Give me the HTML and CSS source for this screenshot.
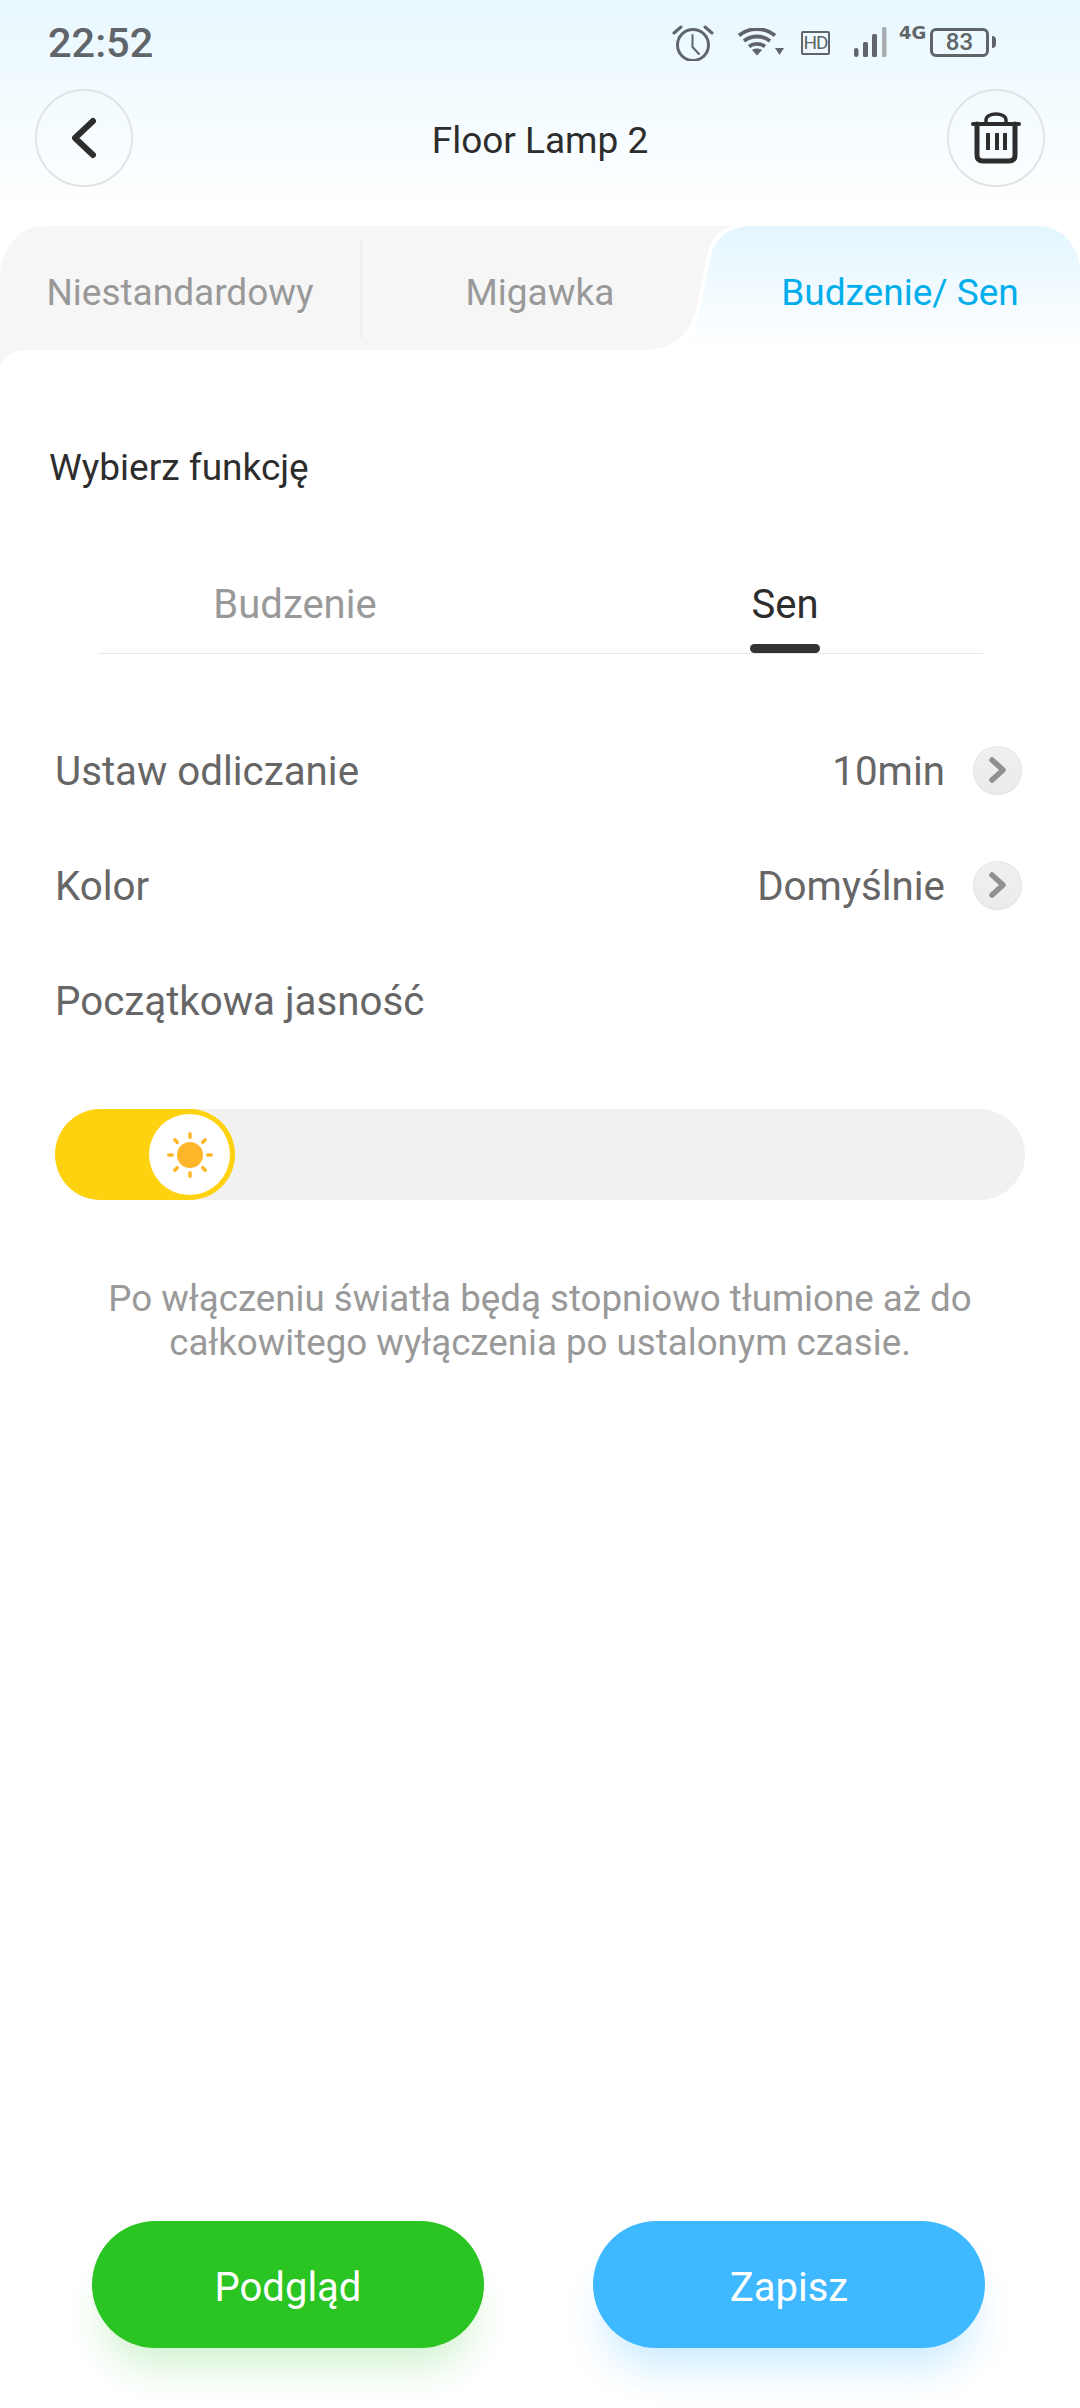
FILE: index.html
```html
<!DOCTYPE html>
<html lang="pl">
<head>
<meta charset="utf-8">
<title>Floor Lamp 2</title>
<link rel="stylesheet" href="styles.css">
</head>
<body>
<div class="page">
  <div class="status">
    <span class="time">22:52</span>
    <div class="status-icons">
      <svg class="ic-alarm" width="42" height="36" viewBox="0 0 42 36" fill="none" stroke="#5f6568" stroke-width="3" stroke-linecap="round">
        <circle cx="21" cy="20" r="15.500"/>
        <path d="M20.500 10V22L27 29" stroke-width="2"/>
        <path d="M2 8L9 2M33 2L40 8"/>
      </svg>
      <svg class="ic-wifi" width="46" height="28" viewBox="0 0 46 28" fill="none" stroke="#5f6568" stroke-width="3.800">
        <path d="M1 7.500C11-1 27-1 37 7.500"/>
        <path d="M6 13C13.500 7 24.500 7 32 13"/>
        <path d="M11 18.500C15.500 15 22.500 15 27 18.500"/>
        <path d="M14 22L19 27.500L24 22C21 20 17 20 14 22Z" fill="#5f6568" stroke="none"/>
        <path d="M37 20H46L41.500 27Z" fill="#5f6568" stroke="none"/>
      </svg>
      <span class="hd">HD</span>
      <svg class="ic-signal" width="34" height="30" viewBox="0 0 34 30">
        <rect x="1" y="21" width="4.500" height="9" rx="2.200" fill="#5f6568"/>
        <rect x="10" y="15" width="5" height="15" rx="1.500" fill="#5f6568"/>
        <rect x="19" y="7" width="5" height="23" rx="1.500" fill="#5f6568"/>
        <rect x="29" y="0" width="4.500" height="30" rx="1.500" fill="#a9afb1"/>
      </svg>
      <span class="net">4G</span>
      <span class="battery"><span class="level">83</span></span>
      <span class="nub"></span>
    </div>
  </div>

  <div class="header">
    <button class="round-btn">
      <svg width="30" height="44" viewBox="0 0 30 44" fill="none" stroke="#2d2d2d" stroke-width="6" stroke-linecap="round" stroke-linejoin="round">
        <path d="M24 5L6 22L24 39"/>
      </svg>
    </button>
    <h1 class="title">Floor Lamp 2</h1>
    <button class="round-btn">
      <svg width="50" height="54" viewBox="0 0 50 54" fill="none" stroke="#2d2d2d" stroke-width="5" stroke-linecap="round" stroke-linejoin="round">
        <path d="M2 13H48" stroke-width="4"/>
        <path d="M15 12V9C15 1 35 1 35 9V12" stroke-width="3.500"/>
        <path d="M6 13V44C6 48 8 50 12 50H38C42 50 44 48 44 44V13"/>
        <path d="M17 22V39M26 22V39M34 22V39" stroke-width="4" stroke-linecap="butt"/>
      </svg>
    </button>
  </div>

  <div class="tabs">
    <svg class="tabs-bg" width="1080" height="140" viewBox="0 0 1080 140">
      <defs>
        <linearGradient id="act" x1="0" y1="0" x2="0" y2="1">
          <stop offset="0" stop-color="#e3f5fe"/>
          <stop offset="1" stop-color="#ffffff"/>
        </linearGradient>
      </defs>
      <path d="M0 140V46C4 20 20 0 44 0H732C718 4 710 14 708 26L696 84C690 108 672 124 645 124H26C14 124 5 130 0 140Z" fill="#f6f6f6"/>
      <path d="M1080 124V40C1076 16 1060 0 1037 0H752C730 0 716 12 712 26L699 88C696 102 692 114 684 124Z" fill="url(#act)"/>
      <rect x="360" y="14" width="2" height="98" fill="#eeeeee"/>
    </svg>
    <span class="tab">Niestandardowy</span>
    <span class="tab">Migawka</span>
    <span class="tab tab-active">Budzenie/ Sen</span>
  </div>

  <main class="card">
    <p class="section-label">Wybierz funkcję</p>
    <div class="subtabs">
      <span class="subtab">Budzenie</span>
      <span class="subtab subtab-active">Sen</span>
    </div>

    <div class="rows">
      <div class="row">
        <span class="row-text">Ustaw odliczanie</span>
        <span class="row-value"><span class="row-text">10min</span>
          <span class="chev">
            <svg width="20" height="28" viewBox="0 0 20 28" fill="none" stroke="#909090" stroke-width="5.500" stroke-linecap="round" stroke-linejoin="round"><path d="M4 4L15 14L4 24"/></svg>
          </span>
        </span>
      </div>
      <div class="row">
        <span class="row-text">Kolor</span>
        <span class="row-value"><span class="row-text">Domyślnie</span>
          <span class="chev">
            <svg width="20" height="28" viewBox="0 0 20 28" fill="none" stroke="#909090" stroke-width="5.500" stroke-linecap="round" stroke-linejoin="round"><path d="M4 4L15 14L4 24"/></svg>
          </span>
        </span>
      </div>
      <div class="row"><span class="row-text">Początkowa jasność</span></div>
    </div>

    <div class="slider">
      <div class="slider-fill">
        <div class="thumb">
          <svg width="48" height="48" viewBox="0 0 48 48" stroke="#ffb529" stroke-width="3.500" stroke-linecap="round">
            <circle cx="24" cy="24" r="13" fill="#ffb529" stroke="none"/>
            <path d="M24 2.750V6.250M24 41.750V45.250M2.750 24H6.250M41.750 24H45.250M8.800 8.800L11.300 11.300M39.200 8.800L36.700 11.300M8.800 39.200L11.300 36.700M39.200 39.200L36.700 36.700"/>
          </svg>
        </div>
      </div>
    </div>

    <p class="hint">Po włączeniu światła będą stopniowo tłumione aż do<br>całkowitego wyłączenia po ustalonym czasie.</p>

    <div class="actions">
      <button class="cta cta-green">Podgląd</button>
      <button class="cta cta-blue">Zapisz</button>
    </div>
  </main>
</div>
</body>
</html>
```

FILE: styles.css
```css
* { box-sizing: border-box; }
html, body { margin: 0; padding: 0; }
body { font-family: Roboto, "Noto Sans", sans-serif; background: #fff; }

.page {
  width: 1080px;
  height: 2408px;
  display: flex;
  flex-direction: column;
  overflow: hidden;
  background: linear-gradient(#e8f8ff 0, #ffffff 215px);
}

.status {
  height: 84px;
  flex: none;
  display: flex;
  align-items: center;
  justify-content: space-between;
  padding: 0 84px 0 48px;
  color: #5f6568;
}
.time { font-size: 41.500px; font-weight: 500; line-height: 84px; padding-top: 2px; }
.status-icons { display: flex; align-items: center; height: 84px; }
.ic-alarm { margin-top: 2px; }
.ic-wifi { margin-left: 24px; margin-top: -1px; }
.hd {
  margin-left: 17px;
  margin-top: 1px;
  width: 29px;
  height: 24px;
  border: 2.500px solid #5f6568;
  border-radius: 2px;
  font-size: 19px;
  line-height: 19px;
  text-align: center;
  letter-spacing: -1px;
}
.ic-signal { margin-left: 23px; }
.net {
  margin-left: 12px;
  width: 27px;
  font-family: "DejaVu Sans", sans-serif;
  font-size: 18px;
  line-height: 16px;
  font-weight: 700;
  margin-top: -19px;
}
.battery {
  margin-left: 4px;
  width: 59px;
  height: 29px;
  border: 3px solid #5f6568;
  border-radius: 6px;
  display: flex;
  align-items: center;
  justify-content: center;
}
.level { font-size: 24px; font-weight: 500; line-height: 24px; }
.nub {
  margin-left: 3px;
  width: 4px;
  height: 12px;
  background: #5f6568;
  border-radius: 0 6px 6px 0;
}

.header {
  flex: none;
  height: 98px;
  margin-top: 5px;
  padding: 0 35px;
  display: flex;
  align-items: center;
  justify-content: space-between;
}
.round-btn {
  width: 98px;
  height: 98px;
  padding: 0;
  border: 2px solid #e2e4e6;
  border-radius: 50%;
  background: transparent;
  display: flex;
  align-items: center;
  justify-content: center;
}
.title { margin: 0; padding-top: 4px; font-size: 37px; font-weight: 400; color: #2d2d2d; }

.tabs {
  flex: none;
  position: relative;
  height: 124px;
  margin-top: 39px;
  display: grid;
  grid-template-columns: repeat(3, 360px);
  align-items: center;
}
.tabs-bg { position: absolute; left: 0; top: 0; }
.tab { position: relative; padding-top: 8px; text-align: center; font-size: 37px; color: #999; }
.tab-active { color: #00aeec; }

.card { flex: 1; display: flex; flex-direction: column; }
.section-label {
  margin: 93px 0 0;
  padding-left: 49px;
  font-size: 37px;
  line-height: 50px;
  color: #2d2d2d;
}

.subtabs {
  margin: 70px 97px 0 98px;
  height: 91px;
  padding-left: 97px;
  display: flex;
  gap: 290px;
  border-bottom: 1px solid #e8e8e8;
}
.subtab {
  position: relative;
  width: 200px;
  text-align: center;
  font-size: 40px;
  line-height: 64px;
  padding-top: 10px;
  color: #999;
}
.subtab-active { color: #2d2d2d; }
.subtab-active::after {
  content: "";
  position: absolute;
  left: 65px;
  bottom: 0;
  width: 70px;
  height: 9px;
  border-radius: 5px;
  background: #333;
}

.rows { margin-top: 58px; }
.row {
  height: 115px;
  padding: 0 58px 0 55px;
  display: flex;
  align-items: center;
  justify-content: space-between;
  font-size: 40.300px;
  color: #666;
}
.row-text { padding-top: 4px; }
.row-value { display: flex; align-items: center; gap: 28px; }
.chev {
  width: 49px;
  height: 48px;
  border-radius: 50%;
  border: 1px solid #e6e6e6;
  background: linear-gradient(#f0f0f0, #ebebeb);
  box-shadow: 0 1px 1px #dcdcdc;
  display: flex;
  align-items: center;
  justify-content: center;
}

.slider {
  flex: none;
  height: 91px;
  margin: 52px 55px 0;
  border-radius: 46px;
  background: #f1f1f1;
}
.slider-fill {
  width: 180px;
  height: 91px;
  padding-right: 5px;
  border-radius: 46px;
  background: #ffd20f;
  display: flex;
  align-items: center;
  justify-content: flex-end;
}
.thumb {
  width: 81px;
  height: 81px;
  border-radius: 50%;
  background: #fff;
  display: flex;
  align-items: center;
  justify-content: center;
}

.hint {
  margin: 77px 0 0;
  text-align: center;
  font-size: 36.700px;
  line-height: 44px;
  color: #999;
}

.actions {
  margin-top: auto;
  padding: 0 95px 60px 92px;
  display: flex;
  justify-content: space-between;
}
.cta {
  width: 392px;
  height: 127px;
  padding: 5px 0 0;
  border: 0;
  border-radius: 64px;
  color: #fff;
  font-family: inherit;
  font-size: 40px;
}
.cta-green { background: #2ac423; box-shadow: 0 30px 40px -12px rgba(42,196,35,.22); }
.cta-blue { background: #3eb8ff; box-shadow: 0 30px 40px -12px rgba(62,184,255,.28); }
```
